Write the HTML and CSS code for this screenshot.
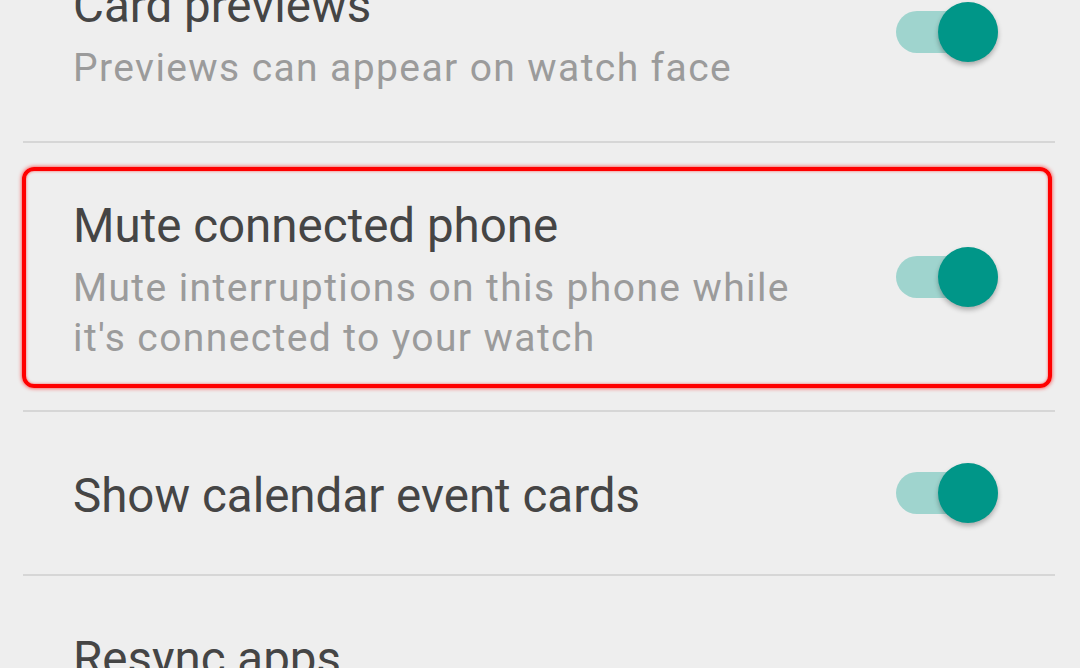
FILE: index.html
```html
<!DOCTYPE html>
<html>
<head>
<meta charset="utf-8">
<link rel="stylesheet" href="styles.css">
</head>
<body>
<div class="list">
  <div class="row row-first">
    <div class="text">
      <div class="title">Card previews</div>
      <div class="summary">Previews can appear on watch face</div>
    </div>
    <div class="switch"><span class="track"></span><span class="thumb"></span></div>
  </div>
  <div class="row highlighted">
    <div class="text">
      <div class="title">Mute connected phone</div>
      <div class="summary">Mute interruptions on this phone while it's connected to your watch</div>
    </div>
    <div class="switch"><span class="track"></span><span class="thumb"></span></div>
    <div class="annotation"></div>
  </div>
  <div class="row">
    <div class="text">
      <div class="title">Show calendar event cards</div>
    </div>
    <div class="switch"><span class="track"></span><span class="thumb"></span></div>
  </div>
  <div class="row row-last">
    <div class="text">
      <div class="title">Resync apps</div>
    </div>
  </div>
</div>
</body>
</html>
```

FILE: styles.css
```css
html, body {
  margin: 0;
  padding: 0;
  background: #eeeeee;
  overflow: hidden;
}
body {
  width: 1080px;
  height: 668px;
  font-family: Roboto, "Noto Sans", sans-serif;
}
.list {
  margin-top: -77px;
  padding: 0 25px 0 23px;
}
.row {
  position: relative;
  display: flex;
  align-items: center;
  padding: 51px 57px 51px 50px;
  border-bottom: 2px solid #d6d6d6;
}
.highlighted {
  padding-bottom: 50px;
}
.row-last {
  border-bottom: none;
}
.text {
  flex: 1;
  min-width: 0;
  padding-top: 3px;
  margin-bottom: -3px;
}
.title {
  font-size: 47.5px;
  line-height: 58px;
  color: #454545;
}
.summary {
  max-width: 740px;
  margin-top: 8px;
  font-size: 39px;
  letter-spacing: 1.4px;
  line-height: 50px;
  color: #9b9b9b;
}
.switch {
  position: relative;
  width: 102px;
  height: 60px;
  flex: none;
  display: flex;
  align-items: center;
}
.track {
  display: block;
  width: 102px;
  height: 42px;
  border-radius: 21px;
  background: #9fd4ce;
}
.thumb {
  position: absolute;
  right: 0;
  top: 0;
  width: 60px;
  height: 60px;
  border-radius: 50%;
  background: #009688;
  box-shadow: 0 3px 5px rgba(0, 0, 0, 0.28);
}
.annotation {
  position: absolute;
  left: -1px;
  right: 3px;
  top: 24px;
  bottom: 22px;
  border: 4px solid #ff0000;
  border-radius: 12px;
  box-shadow: 0 0 4px rgba(255, 0, 0, 0.8), inset 0 0 3px rgba(255, 0, 0, 0.6);
}
```
